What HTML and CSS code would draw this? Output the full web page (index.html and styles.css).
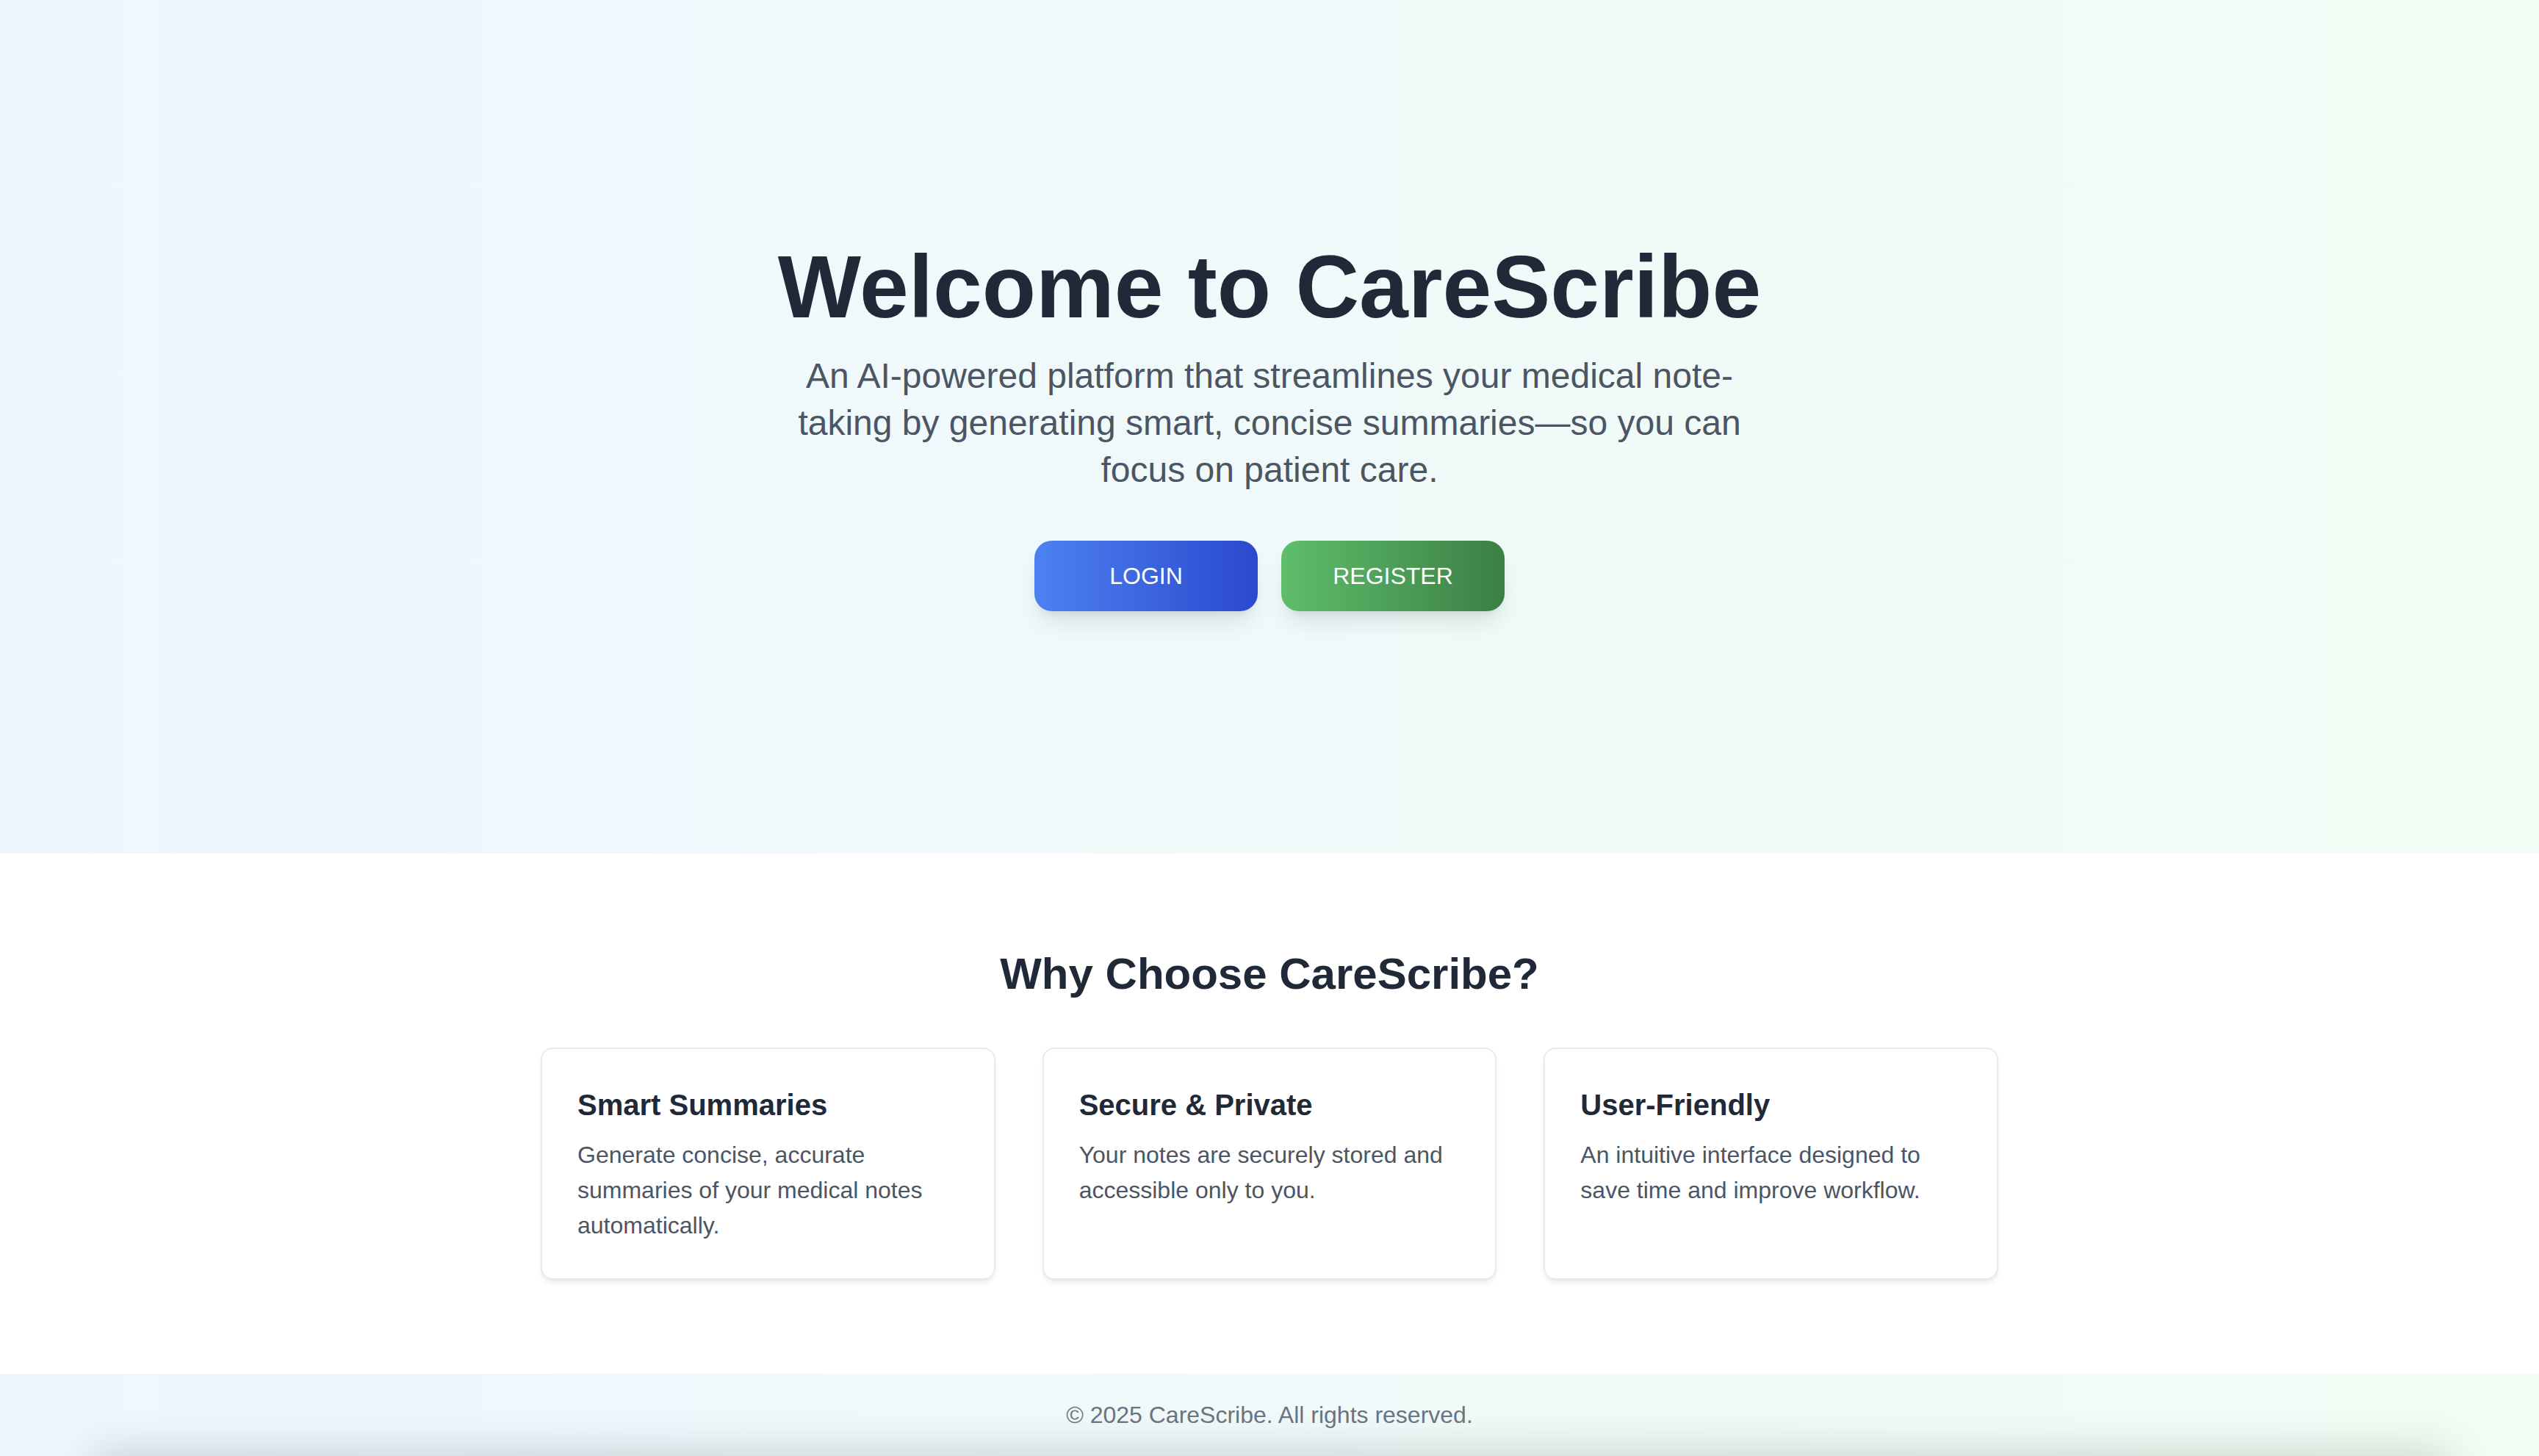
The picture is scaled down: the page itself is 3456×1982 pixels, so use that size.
FILE: index.html
```html
<!DOCTYPE html>
<html lang="en">
<head>
<meta charset="utf-8">
<title>CareScribe</title>
<link rel="stylesheet" href="styles.css">
</head>
<body>
<section class="hero">
  <h1 class="hero-title">Welcome to CareScribe</h1>
  <p class="hero-sub">An AI-powered platform that streamlines your medical note-taking by generating smart, concise summaries—so you can focus on patient care.</p>
  <div class="hero-actions">
    <a class="btn btn-login" href="#">LOGIN</a>
    <a class="btn btn-register" href="#">REGISTER</a>
  </div>
</section>
<section class="features">
  <h2 class="features-title">Why Choose CareScribe?</h2>
  <div class="cards">
    <div class="card">
      <h3 class="card-title">Smart Summaries</h3>
      <p class="card-text">Generate concise, accurate summaries of your medical notes automatically.</p>
    </div>
    <div class="card">
      <h3 class="card-title">Secure &amp; Private</h3>
      <p class="card-text">Your notes are securely stored and accessible only to you.</p>
    </div>
    <div class="card">
      <h3 class="card-title">User-Friendly</h3>
      <p class="card-text">An intuitive interface designed to save time and improve workflow.</p>
    </div>
  </div>
</section>
<footer class="footer">
  <p class="footer-text">© 2025 CareScribe. All rights reserved.</p>
</footer>
</body>
</html>
```
FILE: styles.css
```css
* { box-sizing: border-box; }
html, body { margin: 0; padding: 0; }
body {
  font-family: "Liberation Sans", Arial, Helvetica, sans-serif;
  color: #1f2937;
  background: #ffffff;
}
.hero {
  height: 1162px;
  background: linear-gradient(to right, #eff6ff, #f0fdf4);
  display: flex;
  flex-direction: column;
  align-items: center;
  justify-content: center;
  text-align: center;
}
.hero-title {
  margin: 0 0 30px;
  font-size: 120px;
  line-height: 1;
  font-weight: 700;
  color: #1f2937;
}
.hero-sub {
  margin: 0 0 64px;
  max-width: 1344px;
  font-size: 48px;
  line-height: 64px;
  color: #4b5563;
}
.hero-actions {
  display: flex;
  gap: 32px;
}
.btn {
  display: flex;
  align-items: center;
  justify-content: center;
  width: 304px;
  height: 96px;
  border-radius: 24px;
  color: #ffffff;
  font-size: 32px;
  text-decoration: none;
  box-shadow: 0 20px 30px -6px rgba(0,0,0,0.1), 0 8px 12px -8px rgba(0,0,0,0.1);
}
.btn-login { background: linear-gradient(to right, #4d81f0, #2b49cf); }
.btn-register { background: linear-gradient(to right, #5fbe6b, #3b7f45); }
.features {
  padding: 128px 32px;
  background: #ffffff;
}
.features-title {
  margin: 0 0 64px;
  text-align: center;
  font-size: 60px;
  line-height: 72px;
  font-weight: 700;
  color: #1f2937;
}
.cards {
  max-width: 1984px;
  margin: 0 auto;
  display: grid;
  grid-template-columns: repeat(3, 1fr);
  gap: 64px;
}
.card {
  background: #ffffff;
  border: 2px solid #e8eaed;
  border-radius: 16px;
  padding: 48px;
  box-shadow: 0 6px 10px -2px rgba(0,0,0,0.07), 0 3px 6px -3px rgba(0,0,0,0.07);
}
.card-title {
  margin: 0 0 16px;
  font-size: 40px;
  line-height: 56px;
  font-weight: 700;
  color: #1f2937;
}
.card-text {
  margin: 0;
  font-size: 32px;
  line-height: 48px;
  color: #4b5563;
}
.footer {
  position: relative;
  overflow: hidden;
  padding: 32px;
  background: linear-gradient(to right, #eff6ff, #f0fdf4);
  text-align: center;
}
.footer::after {
  content: "";
  position: absolute;
  left: 130px;
  right: 130px;
  top: 100%;
  height: 120px;
  box-shadow: 0 0 60px 6px rgba(0,0,0,0.16);
}
.footer-text {
  position: relative;
  z-index: 1;
  margin: 0;
  font-size: 32px;
  line-height: 48px;
  color: #6b7280;
}
```
